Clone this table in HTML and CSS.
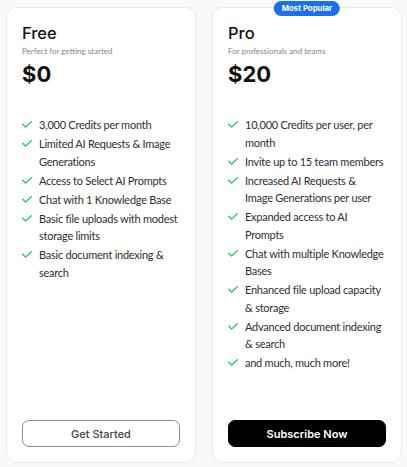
FILE: index.html
```html
<!DOCTYPE html>
<html>
<head>
<meta charset="utf-8">
<link rel="stylesheet" href="styles.css">
</head>
<body>
<div class="plans">
  <div class="card">
    <h2 class="title">Free</h2>
    <p class="sub">Perfect for getting started</p>
    <div class="price">$0</div>
    <ul class="features">
      <li><svg class="chk" viewBox="0 0 10 7"><path d="M0.7 3.3 L3.6 6.1 L9.3 0.7"/></svg><span>3,000 Credits per month</span></li>
      <li><svg class="chk" viewBox="0 0 10 7"><path d="M0.7 3.3 L3.6 6.1 L9.3 0.7"/></svg><span>Limited AI Requests &amp; Image Generations</span></li>
      <li><svg class="chk" viewBox="0 0 10 7"><path d="M0.7 3.3 L3.6 6.1 L9.3 0.7"/></svg><span>Access to Select AI Prompts</span></li>
      <li><svg class="chk" viewBox="0 0 10 7"><path d="M0.7 3.3 L3.6 6.1 L9.3 0.7"/></svg><span>Chat with 1 Knowledge Base</span></li>
      <li><svg class="chk" viewBox="0 0 10 7"><path d="M0.7 3.3 L3.6 6.1 L9.3 0.7"/></svg><span>Basic file uploads with modest storage limits</span></li>
      <li><svg class="chk" viewBox="0 0 10 7"><path d="M0.7 3.3 L3.6 6.1 L9.3 0.7"/></svg><span>Basic document indexing &amp; search</span></li>
    </ul>
    <button class="btn btn-outline">Get Started</button>
  </div>
  <div class="card">
    <span class="badge">Most Popular</span>
    <h2 class="title">Pro</h2>
    <p class="sub">For professionals and teams</p>
    <div class="price">$20</div>
    <ul class="features">
      <li><svg class="chk" viewBox="0 0 10 7"><path d="M0.7 3.3 L3.6 6.1 L9.3 0.7"/></svg><span>10,000 Credits per user, per month</span></li>
      <li><svg class="chk" viewBox="0 0 10 7"><path d="M0.7 3.3 L3.6 6.1 L9.3 0.7"/></svg><span>Invite up to 15 team members</span></li>
      <li><svg class="chk" viewBox="0 0 10 7"><path d="M0.7 3.3 L3.6 6.1 L9.3 0.7"/></svg><span>Increased AI Requests &amp; Image Generations per user</span></li>
      <li><svg class="chk" viewBox="0 0 10 7"><path d="M0.7 3.3 L3.6 6.1 L9.3 0.7"/></svg><span>Expanded access to AI Prompts</span></li>
      <li><svg class="chk" viewBox="0 0 10 7"><path d="M0.7 3.3 L3.6 6.1 L9.3 0.7"/></svg><span>Chat with multiple Knowledge Bases</span></li>
      <li><svg class="chk" viewBox="0 0 10 7"><path d="M0.7 3.3 L3.6 6.1 L9.3 0.7"/></svg><span>Enhanced file upload capacity &amp; storage</span></li>
      <li><svg class="chk" viewBox="0 0 10 7"><path d="M0.7 3.3 L3.6 6.1 L9.3 0.7"/></svg><span>Advanced document indexing &amp; search</span></li>
      <li><svg class="chk" viewBox="0 0 10 7"><path d="M0.7 3.3 L3.6 6.1 L9.3 0.7"/></svg><span>and much, much more!</span></li>
    </ul>
    <button class="btn btn-dark">Subscribe Now</button>
  </div>
</div>
</body>
</html>
```

FILE: styles.css
```css
* { box-sizing: border-box; }
html, body { margin: 0; padding: 0; }
body {
  background: #f8f9fb;
  width: 407px;
  height: 467px;
  font-family: Lato, "Noto Sans", sans-serif;
}
.plans {
  display: grid;
  grid-template-columns: 190px 190px;
  column-gap: 16px;
  padding: 7px 5px 4px 6px;
  height: 467px;
}
.card {
  position: relative;
  background: #fff;
  border: 1px solid #e7e9ee;
  border-radius: 10px;
  padding: 15px 15px 15px 15px;
  display: flex;
  flex-direction: column;
}
.title {
  margin: 0;
  font-family: Inter, sans-serif;
  font-weight: 500;
  font-size: 16.5px;
  line-height: 20px;
  color: #111;
}
.sub {
  margin: 3px 0 0 0;
  font-size: 8px;
  line-height: 11px;
  color: #85858a;
}
.price {
  margin-top: 4px;
  font-family: Inter, sans-serif;
  font-weight: 700;
  font-size: 22px;
  line-height: 26px;
  color: #111;
}
.features {
  list-style: none;
  margin: 29px 0 0 0;
  padding: 0;
  display: flex;
  flex-direction: column;
  gap: 1.5px;
}
.features li {
  display: flex;
  align-items: flex-start;
  gap: 7px;
  font-size: 11px;
  letter-spacing: -0.25px;
  line-height: 17.5px;
  color: #2e2e33;
}
.chk {
  flex: none;
  width: 10px;
  height: 7px;
  margin-top: 5px;
  fill: none;
  stroke: #22c55e;
  stroke-width: 1.3;
  stroke-linecap: round;
  stroke-linejoin: round;
}
.btn {
  margin-top: auto;
  height: 27px;
  border-radius: 7px;
  font-family: Inter, sans-serif;
  font-size: 11px;
  font-weight: 500;
  cursor: pointer;
}
.btn-outline {
  background: #fff;
  border: 1px solid #8d8d92;
  color: #444;
}
.btn-dark {
  background: #000;
  border: 1px solid #000;
  color: #fff;
  font-weight: 600;
}
.badge {
  position: absolute;
  top: -7px;
  left: 50%;
  transform: translateX(-50%);
  background: #1b6fea;
  color: #fff;
  font-family: Inter, sans-serif;
  font-size: 7.8px;
  font-weight: 700;
  line-height: 15px;
  padding: 0 8px;
  border-radius: 8px;
  white-space: nowrap;
}
```
